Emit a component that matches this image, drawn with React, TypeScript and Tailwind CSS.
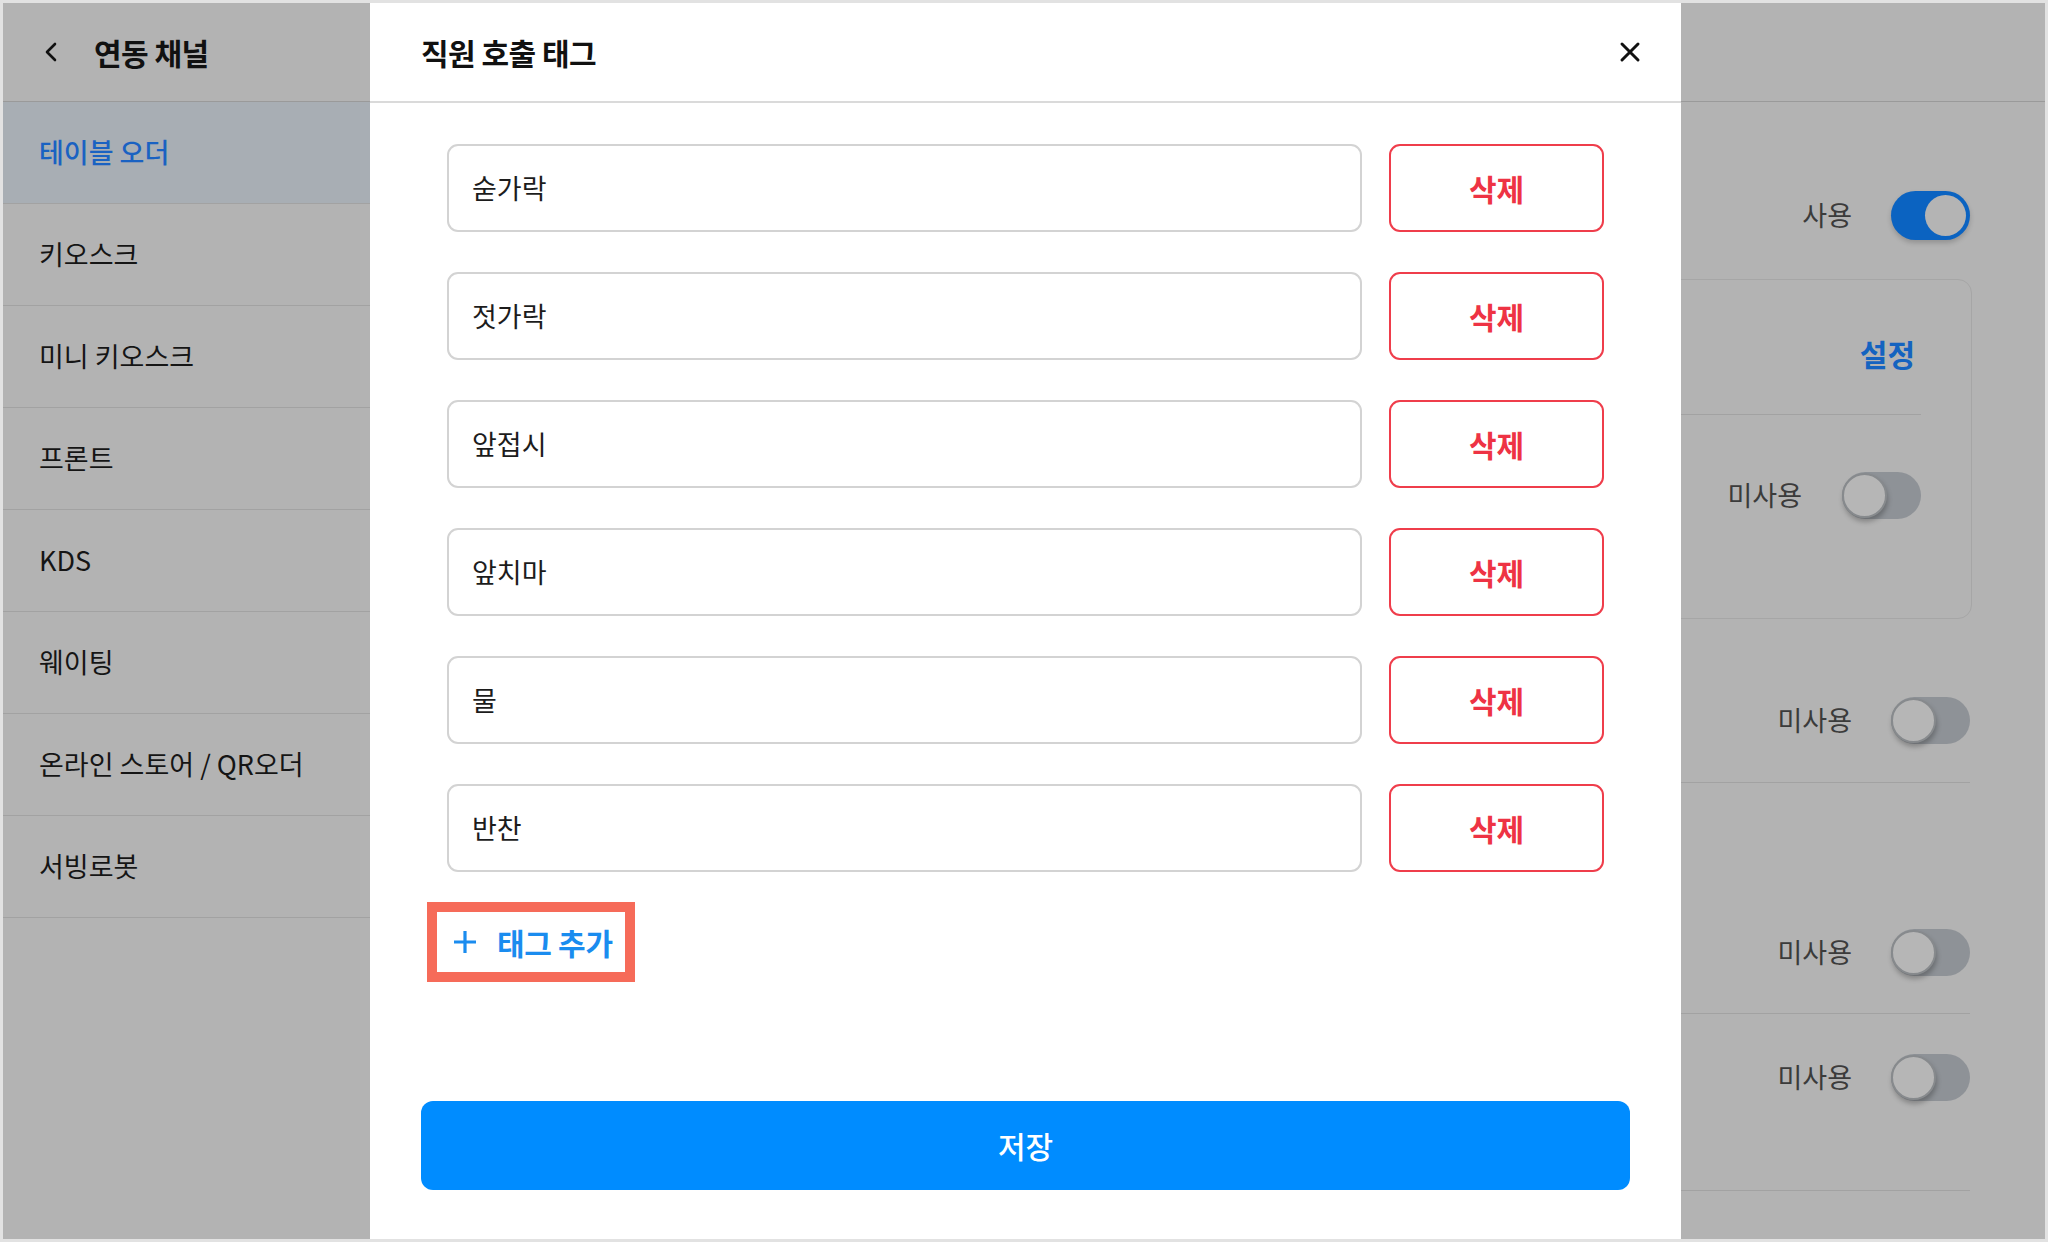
import React from "react";

const FONT = { fontFamily: '"Noto Sans CJK KR", "Noto Sans", sans-serif' };

const menu = [
  "테이블 오더",
  "키오스크",
  "미니 키오스크",
  "프론트",
  "KDS",
  "웨이팅",
  "온라인 스토어 / QR오더",
  "서빙로봇",
];

const tags = ["숟가락", "젓가락", "앞접시", "앞치마", "물", "반찬"];

function Toggle({ on }: { on?: boolean }) {
  if (on) {
    return (
      <div className="flex h-[49px] w-[79px] items-center justify-end rounded-full bg-[#0b63c1] p-[4px] shadow-[0_3px_5px_rgba(0,0,0,0.18)]">
        <div className="h-[41px] w-[41px] rounded-full bg-[#b4b4b4]" />
      </div>
    );
  }
  return (
    <div className="flex h-[47px] w-[79px] items-center justify-start rounded-full bg-[#8e9297]">
      <div className="h-[45px] w-[45px] rounded-full border-[2px] border-[#878a8d] bg-[#b6b6b6] shadow-[1px_4px_5px_rgba(0,0,0,0.25)]" />
    </div>
  );
}

function StatusRow({ label, on }: { label: string; on?: boolean }) {
  return (
    <div className="flex items-center justify-end gap-[39px]">
      <span className="text-[27px] text-[#3b3b3b]">{label}</span>
      <Toggle on={on} />
    </div>
  );
}

export default function App() {
  return (
    <div
      style={FONT}
      className="relative flex h-[1242px] w-[2048px] overflow-hidden border-[3px] border-[#e2e2e2] bg-[#b3b3b3] text-[#111]"
    >
      {/* Sidebar */}
      <aside className="flex w-[367px] shrink-0 flex-col bg-[#b3b3b3]">
        <div className="flex h-[99px] items-center gap-[35px] border-b border-[#9a9a9a] pl-[40px]">
          <svg width="16" height="22" viewBox="0 0 16 22" fill="none">
            <path d="M12 3 L4 11 L12 19" stroke="#111" strokeWidth="2.6" strokeLinecap="round" strokeLinejoin="round" />
          </svg>
          <span className="text-[30px] font-bold tracking-[-0.5px]">연동 채널</span>
        </div>
        {menu.map((m, i) => (
          <div
            key={m}
            className={
              i === 0
                ? "flex h-[102px] items-center border-b border-[#a2a2a2] bg-[#a8aeb4] pl-[36px] text-[27px] font-medium text-[#1a62c2]"
                : "flex h-[102px] items-center border-b border-[#a2a2a2] pl-[36px] text-[27px] text-[#151515]"
            }
          >
            {m}
          </div>
        ))}
      </aside>

      {/* Background main content */}
      <main className="flex flex-1 flex-col">
        <div className="h-[99px] shrink-0 border-b border-[#9a9a9a]" />
        <div className="flex flex-col pr-[75px]">
          <div className="mt-[89px]">
            <StatusRow label="사용" on />
          </div>
          <div className="ml-[40px] mr-[-2px] mt-[39px] flex h-[340px] flex-col rounded-[14px] border border-[#a6a6a6] px-[50px]">
            <div className="flex h-[135px] items-center justify-end border-b border-[#a2a2a2] pr-[6px] pt-[12px]">
              <span className="text-[30px] font-bold text-[#1463c0]">설정</span>
            </div>
            <div className="mt-[57px]">
              <div className="flex items-center justify-end gap-[40px]">
                <span className="text-[27px] text-[#3b3b3b]">미사용</span>
                <Toggle />
              </div>
            </div>
          </div>
          <div className="h-[164px] border-b border-[#a2a2a2] pt-[78px]">
            <StatusRow label="미사용" />
          </div>
          <div className="h-[231px] border-b border-[#a2a2a2] pt-[146px]">
            <StatusRow label="미사용" />
          </div>
          <div className="h-[177px] border-b border-[#a2a2a2] pt-[40px]">
            <StatusRow label="미사용" />
          </div>
        </div>
      </main>

      {/* Modal */}
      <section className="absolute left-[367px] top-0 flex h-full w-[1311px] flex-col bg-white">
        <header className="flex h-[100px] shrink-0 items-center justify-between border-b-2 border-[#dadada] pl-[51px] pr-[40px]">
          <h1 className="text-[30px] font-bold tracking-[-0.5px] text-[#111]">직원 호출 태그</h1>
          <svg width="22" height="22" viewBox="0 0 22 22" fill="none">
            <path d="M3 3 L19 19 M19 3 L3 19" stroke="#111" strokeWidth="3" strokeLinecap="round" />
          </svg>
        </header>

        <div className="flex flex-col gap-[40px] pl-[77px] pr-[77px] pt-[41px]">
          {tags.map((t) => (
            <div key={t} className="flex gap-[27px]">
              <div className="flex h-[88px] flex-1 items-center rounded-[11px] border-2 border-[#d3d3d3] pl-[23px] text-[27px] text-[#1c1c1c]">
                {t}
              </div>
              <button className="flex h-[88px] w-[215px] items-center justify-center rounded-[11px] border-2 border-[#ef3d4b] text-[30px] font-bold text-[#ee3344]">
                삭제
              </button>
            </div>
          ))}
        </div>

        <div className="ml-[57px] mt-[30px] flex h-[80px] w-[208px] items-center border-[10px] border-[#f66b59] pl-[15px]">
          <svg width="26" height="26" viewBox="0 0 26 26" fill="none">
            <path d="M13 2 V24 M2 13 H24" stroke="#1a8cef" strokeWidth="3.2" />
          </svg>
          <span className="ml-[19px] whitespace-nowrap text-[30px] font-bold tracking-[-0.3px] text-[#1a8cef]">태그 추가</span>
        </div>

        <button className="mx-[51px] mb-[49px] mt-auto flex h-[89px] items-center justify-center rounded-[12px] bg-[#008cff] text-[30px] font-medium text-white">
          저장
        </button>
      </section>
    </div>
  );
}
